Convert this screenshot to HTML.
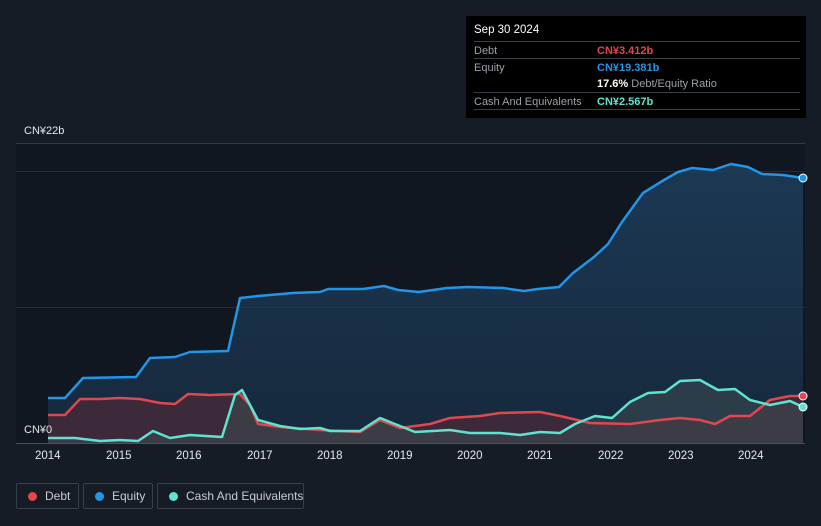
<!DOCTYPE html>
<html><head><meta charset="utf-8"><style>
body{margin:0;background:#161c26;width:821px;height:526px;overflow:hidden;font-family:"Liberation Sans",sans-serif;position:relative}
.tip{position:absolute;left:466px;top:16px;width:340px;height:102px;background:#000;color:#fff;font-size:11px}
.tip .r{position:absolute;left:8px;width:326px;border-top:1px solid #3a3f47;height:16px}
.tip span{position:absolute;top:3px}
.lg{position:absolute;top:483px;height:26px;border:1px solid #3a404a;border-radius:2px;color:#c8ccd2;font-size:12px;box-sizing:border-box;white-space:nowrap}
.lg i{position:absolute;left:11px;top:8px;width:9px;height:9px;border-radius:50%}
.lg b{font-weight:normal;position:absolute;left:28px;top:5px}
.yr{position:absolute;top:450px;color:#e6e8eb;font-size:11.5px}
</style></head><body>
<svg width="821" height="526" style="position:absolute;left:0;top:0">
<defs><linearGradient id="eg" x1="0" y1="0" x2="0" y2="1"><stop offset="0" stop-color="#1f4466" stop-opacity=".75"/><stop offset="1" stop-color="#1a3550" stop-opacity=".6"/></linearGradient></defs>
<rect x="16" y="143" width="789" height="300" fill="#111720"/>
<line x1="16" y1="143.5" x2="805" y2="143.5" stroke="#333a45"/>
<line x1="16" y1="171.5" x2="805" y2="171.5" stroke="#262d38"/>
<line x1="16" y1="307.5" x2="805" y2="307.5" stroke="#262d38"/>
<path d="M48,398 L65,398 L83,378 L136,377 L150,358 L175,357 L190,352 L228,351 L240,298 L258,296 L293,293 L320,292 L328,289 L363,289 L384,286 L398,290 L419,292 L447,288 L468,287 L503,288 L524,291 L538,289 L559,287 L573,273 L594,257 L608,244 L622,222 L643,193 L664,180 L678,172 L692,168 L713,170 L731,164 L748,167 L762,174 L783,175 L803,178 L803,443 L48,443Z" fill="url(#eg)"/>
<path d="M48,415 65,415 80,399 100,399 120,398 140,399 160,403 175,404 188,394 210,395 240,394 250,405 258,424 280,427 320,430 360,432 380,420 400,428 430,424 450,418 480,416 500,413 540,412 560,416 590,423 630,424 660,420 680,418 700,420 715,424 730,416 750,416 770,400 790,396 803,396 803,443 48,443Z" fill="#4a2a38" fill-opacity=".75"/>
<path d="M48,438 75,438 100,441 120,440 138,441 153,431 170,438 190,435 222,437 235,395 242,390 250,405 258,420 280,426 300,429 320,428 330,431 360,431 380,418 395,424 415,432 450,430 470,433 500,433 520,435 540,432 560,433 575,424 595,416 612,418 630,402 648,393 665,392 680,381 700,380 718,390 735,389 750,400 770,405 790,401 803,407 803,443 48,443Z" fill="#3a4a50" fill-opacity=".6"/>
<path d="M48,398 L65,398 L83,378 L136,377 L150,358 L175,357 L190,352 L228,351 L240,298 L258,296 L293,293 L320,292 L328,289 L363,289 L384,286 L398,290 L419,292 L447,288 L468,287 L503,288 L524,291 L538,289 L559,287 L573,273 L594,257 L608,244 L622,222 L643,193 L664,180 L678,172 L692,168 L713,170 L731,164 L748,167 L762,174 L783,175 L803,178" fill="none" stroke="#2394e6" stroke-width="2.5" stroke-linejoin="round"/>
<path d="M48,415 65,415 80,399 100,399 120,398 140,399 160,403 175,404 188,394 210,395 240,394 250,405 258,424 280,427 320,430 360,432 380,420 400,428 430,424 450,418 480,416 500,413 540,412 560,416 590,423 630,424 660,420 680,418 700,420 715,424 730,416 750,416 770,400 790,396 803,396" fill="none" stroke="#e0474f" stroke-width="2.5" stroke-linejoin="round"/>
<path d="M48,438 75,438 100,441 120,440 138,441 153,431 170,438 190,435 222,437 235,395 242,390 250,405 258,420 280,426 300,429 320,428 330,431 360,431 380,418 395,424 415,432 450,430 470,433 500,433 520,435 540,432 560,433 575,424 595,416 612,418 630,402 648,393 665,392 680,381 700,380 718,390 735,389 750,400 770,405 790,401 803,407" fill="none" stroke="#5ee3cf" stroke-width="2.5" stroke-linejoin="round"/>
<line x1="16" y1="443.5" x2="805" y2="443.5" stroke="#4a505a"/>
<circle cx="803" cy="178" r="4" fill="#2394e6" stroke="#fff" stroke-width="1"/>
<circle cx="803" cy="396" r="4" fill="#e0474f" stroke="#fff" stroke-width="1"/>
<circle cx="803" cy="407" r="4" fill="#5ee3cf" stroke="#fff" stroke-width="1"/>
</svg>
<div style="position:absolute;left:24px;top:125px;color:#e6e8eb;font-size:11px">CN¥22b</div>
<div style="position:absolute;left:24px;top:424px;color:#e6e8eb;font-size:11px">CN¥0</div>
<div class="yr" style="left:35px">2014</div><div class="yr" style="left:106px">2015</div><div class="yr" style="left:176px">2016</div><div class="yr" style="left:247px">2017</div><div class="yr" style="left:317px">2018</div><div class="yr" style="left:387px">2019</div><div class="yr" style="left:457px">2020</div><div class="yr" style="left:527px">2021</div><div class="yr" style="left:598px">2022</div><div class="yr" style="left:668px">2023</div><div class="yr" style="left:738px">2024</div>
<div class="tip">
<div style="position:absolute;left:8px;top:8px;font-size:11.5px">Sep 30 2024</div>
<div class="r" style="top:25px"><span style="color:#9aa0a8">Debt</span><span style="left:123px;color:#e0474f;font-weight:bold">CN¥3.412b</span></div>
<div class="r" style="top:42px"><span style="color:#9aa0a8">Equity</span><span style="left:123px;color:#2394e6;font-weight:bold">CN¥19.381b</span></div>
<div style="position:absolute;left:131px;top:62px"><b>17.6%</b> <span style="position:static;color:#9aa0a8">Debt/Equity Ratio</span></div>
<div class="r" style="top:76px;height:16px;border-bottom:1px solid #3a3f47"><span style="color:#9aa0a8">Cash And Equivalents</span><span style="left:123px;color:#5ee3cf;font-weight:bold">CN¥2.567b</span></div>
</div>
<div class="lg" style="left:16px;width:63px"><i style="background:#e0474f"></i><b>Debt</b></div>
<div class="lg" style="left:83px;width:70px"><i style="background:#2394e6"></i><b>Equity</b></div>
<div class="lg" style="left:157px;width:147px"><i style="background:#5ee3cf"></i><b>Cash And Equivalents</b></div>
</body></html>
